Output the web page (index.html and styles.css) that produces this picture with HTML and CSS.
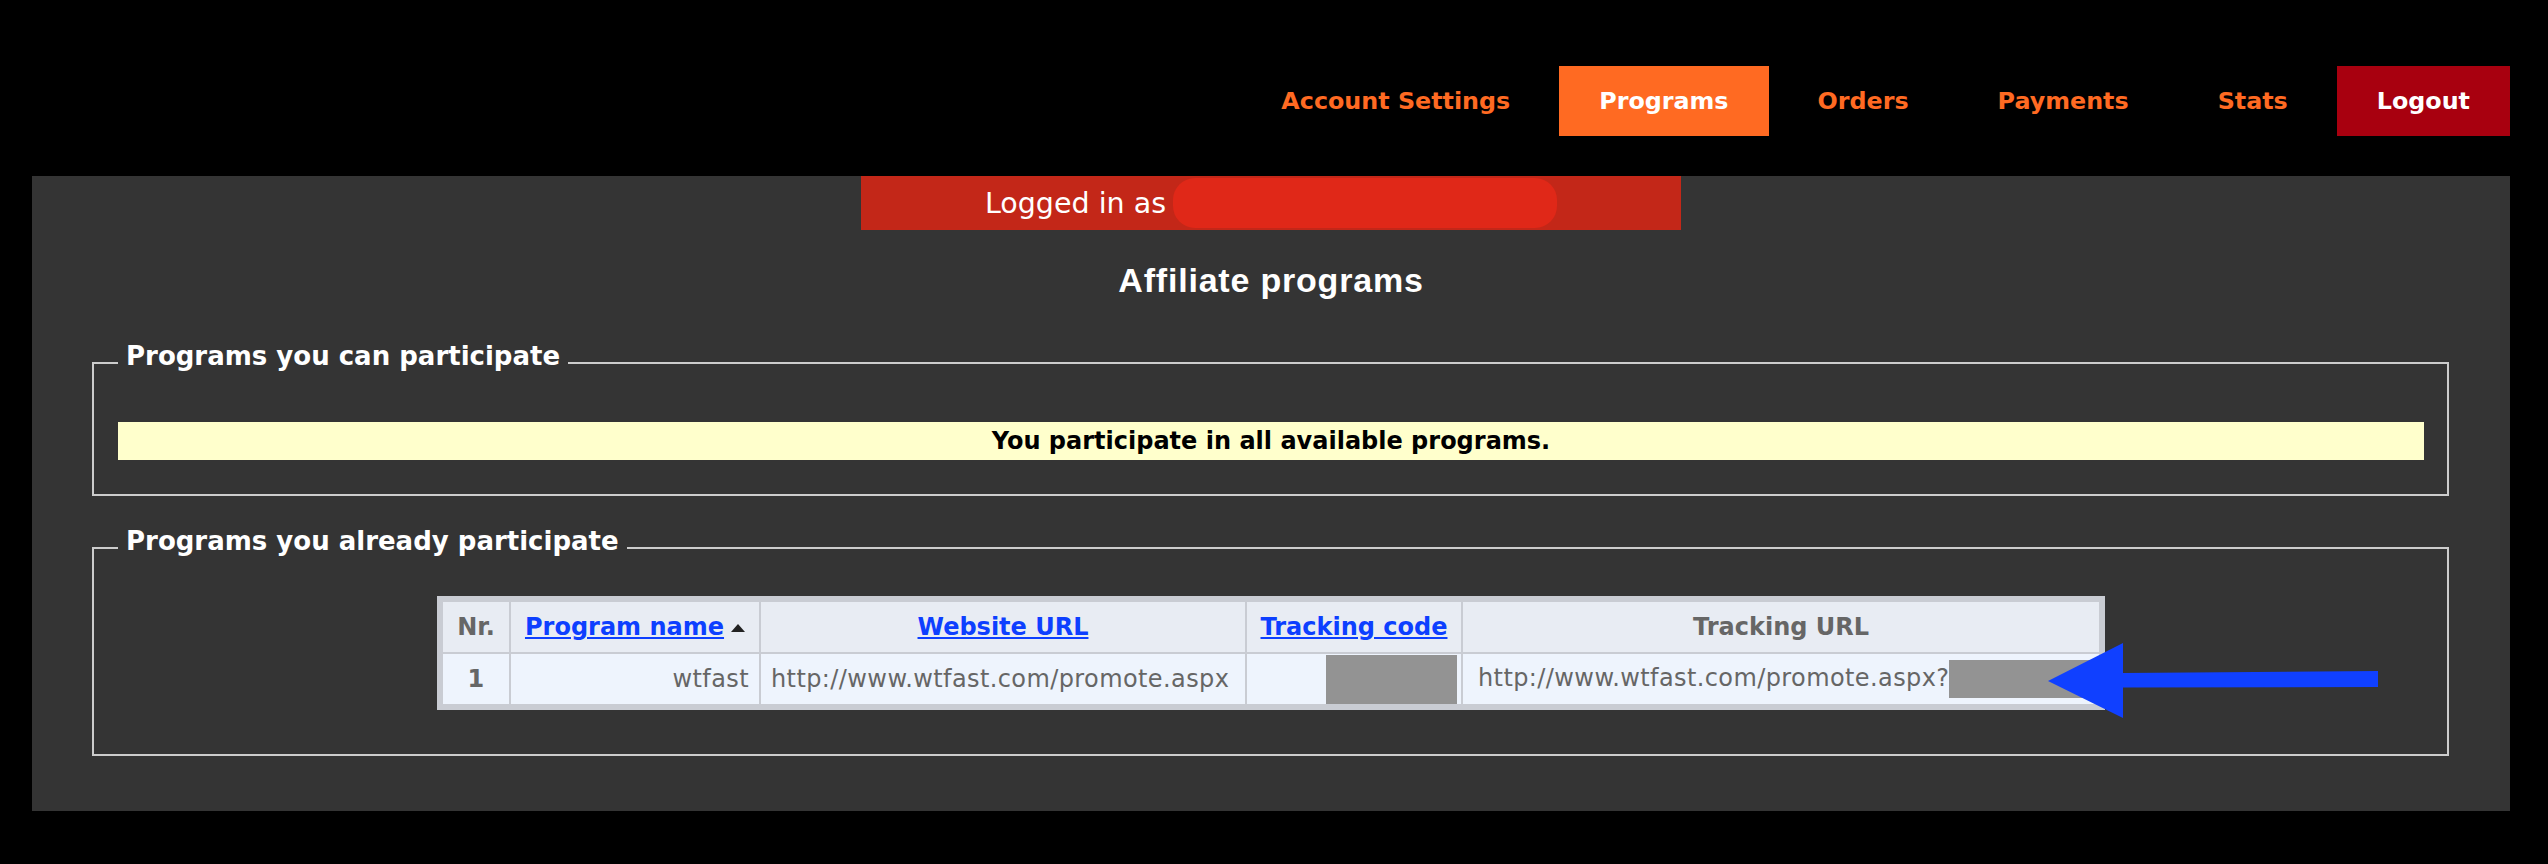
FILE: index.html
```html
<!DOCTYPE html>
<html lang="en">
<head>
  <meta charset="UTF-8" />
  <title>Affiliate programs</title>
  <link rel="stylesheet" href="styles.css">
</head>
<body>

<div class="topnav">
  <a href="#">Account Settings</a>
  <a href="#" class="active">Programs</a>
  <a href="#">Orders</a>
  <a href="#">Payments</a>
  <a href="#">Stats</a>
  <a href="#" class="logout">Logout</a>
</div>

<div class="panel">
  <div class="login-bar">
    Logged in as<span class="hidden-name"></span>
  </div>

  <h1>Affiliate programs</h1>

  <fieldset>
    <legend>Programs you can participate</legend>
    <div class="notice">You participate in all available programs.</div>
  </fieldset>

  <fieldset class="joined">
    <legend>Programs you already participate</legend>
    <div class="table-wrap">
      <table class="grid">
        <thead>
          <tr>
            <th class="col-nr">Nr.</th>
            <th class="col-name"><a href="#">Program name</a><span class="sort-up"></span></th>
            <th class="col-site"><a href="#">Website URL</a></th>
            <th class="col-code"><a href="#">Tracking code</a></th>
            <th class="col-url">Tracking URL</th>
          </tr>
        </thead>
        <tbody>
          <tr>
            <td class="nr">1</td>
            <td class="name">wtfast</td>
            <td>http://www.wtfast.com/promote.aspx</td>
            <td class="code"><span class="blur-code"></span></td>
            <td class="url">http://www.wtfast.com/promote.aspx?<span class="blur-url"></span></td>
          </tr>
        </tbody>
      </table>

      <svg class="pointer" width="330" height="75" viewBox="0 0 330 75">
        <polygon points="0,38 75,0 75,30 330,28 330,44 75,44.5 75,75" fill="#1040ff" />
      </svg>
    </div>
  </fieldset>
</div>

</body>
</html>
```

FILE: styles.css
```css
body {
  margin: 0;
  background: #000;
  font-family: "DejaVu Sans", Verdana, sans-serif;
  font-size: 24px;
}

.topnav {
  display: flex;
  justify-content: flex-end;
  gap: 9px;
  padding: 66px 38px 0 0;
}

.topnav a {
  padding: 0 40px;
  line-height: 70px;
  font-size: 23.8px;
  color: #ff6a22;
  font-weight: bold;
  text-decoration: none;
}

.topnav a.active {
  background: #ff6a22;
  color: #fff;
}

.topnav a.logout {
  background: #a8000f;
  color: #fff;
}

.panel {
  margin: 40px 38px 0 32px;
  padding-bottom: 55px;
  background: #343434;
}

.login-bar {
  width: 820px;
  height: 54px;
  margin: 0 auto;
  display: flex;
  align-items: center;
  justify-content: center;
  background: #c32718;
  color: #fff;
  font-size: 28.5px;
}

.hidden-name {
  display: inline-block;
  width: 384px;
  height: 50px;
  margin-left: 7px;
  background: #e02818;
  border-radius: 22px;
}

h1 {
  margin: 30px 0 41px;
  font-family: "Liberation Sans", Arial, sans-serif;
  font-size: 34px;
  line-height: 40px;
  letter-spacing: 0.8px;
  text-align: center;
  color: #fff;
}

fieldset {
  margin: 0 61px 0 60px;
  padding: 37px 23px 34px 24px;
  border: 2px solid #cccccc;
}

legend {
  padding: 0 8px 14px;
  line-height: 30px;
  font-size: 26px;
  font-weight: bold;
  color: #fff;
}

.notice {
  height: 38px;
  line-height: 38px;
  background: #ffffcc;
  color: #000;
  font-weight: bold;
  text-align: center;
}

fieldset.joined {
  margin-top: 30px;
  padding-top: 26px;
  padding-bottom: 44px;
}

.table-wrap {
  position: relative;
  width: 1668px;
  margin: 0 auto;
}

.grid {
  width: 1668px;
  table-layout: fixed;
  border: 4px solid #c9ccd3;
  border-spacing: 2px;
  background: #c9ccd3;
  color: #666;
}

.grid th,
.grid td {
  box-sizing: border-box;
  height: 50px;
  padding: 0 10px;
  white-space: nowrap;
}

.grid th {
  background: #e8ecf3;
  font-weight: bold;
}

.grid td {
  background: #eef4fd;
  letter-spacing: 0.4px;
}

.grid a {
  color: #0d3fff;
}

.col-nr { width: 66px; }
.col-name { width: 248px; }
.col-site { width: 484px; }
.col-code { width: 214px; }
.col-url { width: 636px; }

.sort-up {
  display: inline-block;
  margin-left: 7px;
  border-left: 7px solid transparent;
  border-right: 7px solid transparent;
  border-bottom: 8px solid #222;
  vertical-align: middle;
}

td.nr {
  text-align: center;
  font-weight: bold;
}

td.name {
  text-align: right;
}

td.code {
  padding: 0 4px 0 0;
}

.blur-code {
  display: block;
  width: 131px;
  height: 49px;
  margin-left: auto;
  background: #939393;
}

td.url {
  padding-left: 15px;
}

.blur-url {
  display: inline-block;
  width: 150px;
  height: 38px;
  vertical-align: middle;
  background: #939393;
}

.pointer {
  position: absolute;
  left: 1611px;
  top: 47px;
}
```
